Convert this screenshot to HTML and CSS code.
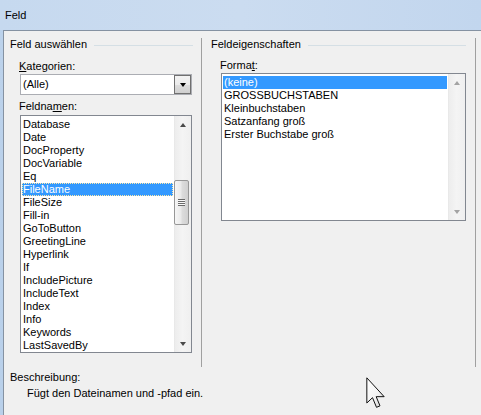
FILE: index.html
```html
<!DOCTYPE html>
<html lang="de">
<head>
<meta charset="utf-8">
<title>Feld</title>
<link rel="stylesheet" href="styles.css">
</head>
<body>
<div class="window">
  <div class="titlebar">Feld</div>
  <div class="client">
    <div class="main">
      <section class="pane pane-left">
        <div class="group-head"><span>Feld auswählen</span><i class="rule"></i></div>
        <div class="field-label label-kat"><u>K</u>ategorien:</div>
        <div class="combo">
          <span class="combo-text">(Alle)</span>
          <span class="combo-btn"><i class="tri-down"></i></span>
        </div>
        <div class="field-label label-names">Feldna<u>m</u>en:</div>
        <div class="listbox listbox-names">
          <ul class="items">
            <li>Database</li>
            <li>Date</li>
            <li>DocProperty</li>
            <li>DocVariable</li>
            <li>Eq</li>
            <li class="selected focused">FileName</li>
            <li>FileSize</li>
            <li>Fill-in</li>
            <li>GoToButton</li>
            <li>GreetingLine</li>
            <li>Hyperlink</li>
            <li>If</li>
            <li>IncludePicture</li>
            <li>IncludeText</li>
            <li>Index</li>
            <li>Info</li>
            <li>Keywords</li>
            <li>LastSavedBy</li>
          </ul>
          <div class="scrollbar">
            <div class="sb-btn"><i class="tri-up"></i></div>
            <div class="sb-track"><div class="sb-thumb"><i class="grip"></i></div></div>
            <div class="sb-btn"><i class="tri-down sb-tri"></i></div>
          </div>
        </div>
      </section>
      <section class="pane pane-right">
        <div class="group-head"><span>Feldeigenschaften</span><i class="rule"></i></div>
        <div class="field-label label-format">Forma<u>t</u>:</div>
        <div class="listbox listbox-format">
          <ul class="items">
            <li class="selected">(keine)</li>
            <li>GROSSBUCHSTABEN</li>
            <li>Kleinbuchstaben</li>
            <li>Satzanfang groß</li>
            <li>Erster Buchstabe groß</li>
          </ul>
          <div class="scrollbar disabled">
            <div class="sb-btn"><i class="tri-up"></i></div>
            <div class="sb-track"></div>
            <div class="sb-btn"><i class="tri-down sb-tri"></i></div>
          </div>
        </div>
      </section>
    </div>
    <div class="desc-label">Beschreibung:</div>
    <div class="desc-text">Fügt den Dateinamen und -pfad ein.</div>
  </div>
  <svg class="cursor" width="21" height="32" viewBox="0 0 12.6 19.2" aria-hidden="true">
    <defs>
      <linearGradient id="cg" x1="0" y1="0" x2="1" y2="1">
        <stop offset="0" stop-color="#ffffff"/>
        <stop offset="0.6" stop-color="#f2f2f2"/>
        <stop offset="1" stop-color="#c8c8c8"/>
      </linearGradient>
    </defs>
    <path d="M0.5 0.5 L0.5 15.6 L3.9 12.4 L6.3 18.2 L8.4 17.3 L6.1 11.8 L10.9 11.8 Z" fill="url(#cg)" stroke="#111" stroke-width="0.6" stroke-linejoin="miter"/>
  </svg>
</div>
</body>
</html>
```

FILE: styles.css
```css
* {
  box-sizing: border-box;
  margin: 0;
  padding: 0;
}

html,
body {
  width: 481px;
  height: 415px;
  overflow: hidden;
}

body {
  font-family: "Liberation Sans", Arial, sans-serif;
  font-size: 11px;
  line-height: 13px;
  color: #000;
  background: #f0f0f0;
}

.window {
  position: relative;
  width: 481px;
  height: 415px;
  display: flex;
  flex-direction: column;
  background: linear-gradient(to bottom, #c9dbf0 0, #bcd2eb 30px, #b9d0ea 100%);
}

.titlebar {
  flex: none;
  height: 30px;
  line-height: 30px;
  padding-left: 5px;
  color: #000;
  background: linear-gradient(to right, #c6d9ef 0%, #cbdcf0 50%, #c2d6ee 100%);
}

.client {
  flex: 1;
  margin-left: 3px;
  border-left: 1px solid #8592a2;
  border-top: 1px solid #8592a2;
  background: #f0f0f0;
}

.main {
  display: flex;
  margin-top: 7px;
  height: 329px;
}

.pane {
  display: flex;
  flex-direction: column;
}

.pane-left {
  width: 197px;
  padding-left: 6px;
  padding-right: 8px;
}

.pane-right {
  width: 275px;
  border-left: 1px solid #a0a0a0;
  border-right: 1px solid #a0a0a0;
  padding-left: 9px;
  padding-right: 9px;
}

.group-head {
  display: flex;
  align-items: center;
  height: 13px;
}

.group-head span {
  white-space: nowrap;
}

.group-head .rule {
  flex: 1;
  height: 1px;
  margin-left: 7px;
  margin-top: 1px;
  background: #d5dfe5;
}

.field-label {
  height: 13px;
  margin-left: 9px;
}

.field-label u {
  text-decoration: underline;
  text-underline-offset: 1px;
}

.label-kat {
  margin-top: 9px;
}

.label-names {
  margin-top: 5px;
}

.label-format {
  margin-top: 8px;
}

/* combo box */
.combo {
  display: flex;
  margin-top: 1px;
  margin-left: 10px;
  width: 172px;
  height: 21px;
  border: 1px solid #abadb3;
  background: #fff;
}

.combo-text {
  flex: 1;
  padding-left: 2px;
  line-height: 19px;
}

.combo-btn {
  display: flex;
  align-items: center;
  justify-content: center;
  width: 17px;
  height: 19px;
  border: 1px solid #707070;
  background: linear-gradient(to bottom, #f3f3f3 0%, #ebebeb 50%, #dddddd 51%, #cfcfcf 100%);
}

.tri-down {
  display: block;
  width: 0;
  height: 0;
  border-left: 3.5px solid transparent;
  border-right: 3.5px solid transparent;
  border-top: 4px solid #000;
  margin-top: 1px;
}

.tri-up {
  display: block;
  width: 0;
  height: 0;
  border-left: 3.5px solid transparent;
  border-right: 3.5px solid transparent;
  border-bottom: 4px solid #4a4a4a;
}

/* list boxes */
.listbox {
  display: flex;
  margin-left: 10px;
  border: 1px solid #828790;
  background: #fff;
}

.listbox-names {
  margin-top: 2px;
  width: 172px;
  height: 238px;
}

.listbox-format {
  margin-top: 1px;
  width: 245px;
  height: 148px;
}

.items {
  flex: 1;
  list-style: none;
  padding-top: 2px;
  overflow: hidden;
}

.items li {
  height: 13px;
  line-height: 13px;
  margin: 0 1px;
  padding-left: 1px;
  white-space: nowrap;
}

.items li.selected {
  background: #3399ff;
  color: #fff;
}

.items li.focused {
  outline: 1px dotted #ffe9a8;
  outline-offset: -1px;
}

/* scrollbars */
.scrollbar {
  display: flex;
  flex-direction: column;
  width: 17px;
  background: linear-gradient(to right, #e4e4e4 0, #ededed 1px, #f4f4f4 50%, #efefef 100%);
}

.sb-btn {
  flex: none;
  height: 17px;
  display: flex;
  align-items: center;
  justify-content: center;
}

.sb-tri {
  border-top-color: #4a4a4a;
  margin-top: 0;
}

.sb-track {
  flex: 1;
}

.sb-thumb {
  display: flex;
  align-items: center;
  justify-content: center;
  margin-top: 47px;
  width: 15px;
  height: 45px;
  border: 1px solid #979797;
  border-radius: 2px;
  background: linear-gradient(to right, #f6f6f6 0%, #eaeaea 45%, #dcdcdc 55%, #d0d0d0 100%);
}

.grip {
  display: block;
  width: 7px;
  height: 7px;
  background: repeating-linear-gradient(to bottom, #6a6a6a 0, #6a6a6a 1px, #f8f8f8 1px, #f8f8f8 2px);
}

.scrollbar.disabled .tri-up {
  border-bottom-color: #a3a3a3;
}

.scrollbar.disabled .sb-tri {
  border-top-color: #a3a3a3;
}

/* description */
.desc-label {
  margin-top: 4px;
  padding-left: 6px;
  height: 13px;
}

.desc-text {
  margin-top: 3px;
  padding-left: 23px;
  height: 13px;
}

.cursor {
  position: absolute;
  left: 366px;
  top: 377px;
}
```
